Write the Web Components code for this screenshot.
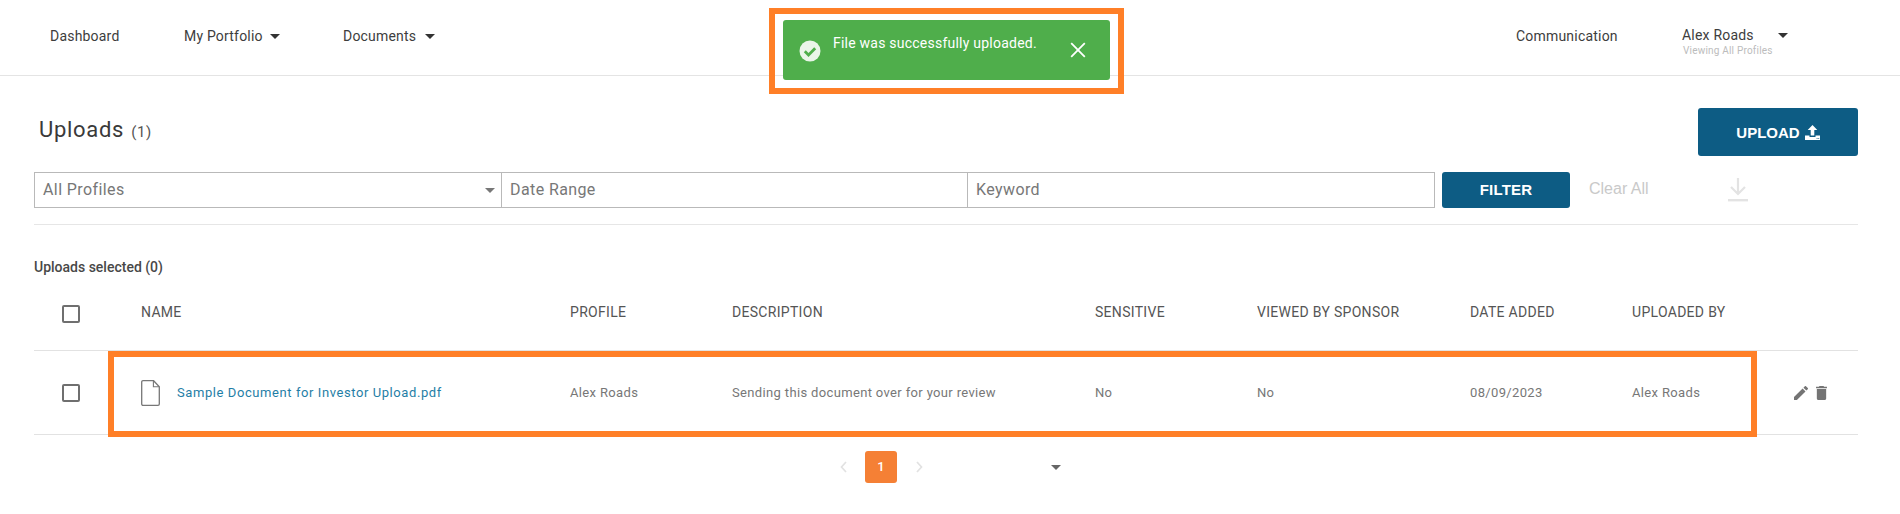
<!DOCTYPE html>
<html lang="en">
<head>
<meta charset="utf-8">
<title>Uploads</title>
<style>
html,body{margin:0;padding:0;background:#fff;font-family:Roboto,"Liberation Sans",sans-serif;color:#444}
body{position:relative;width:1900px;height:514px;overflow:hidden}
</style>
</head>
<body>
<app-nav>
  <nav-link slot="left" style="width:134px">Dashboard</nav-link>
  <nav-link slot="left" caret style="width:159px;gap:7px">My Portfolio</nav-link>
  <nav-link slot="left" caret>Documents</nav-link>
  <nav-link slot="right" style="width:166px">Communication</nav-link>
  <user-menu slot="right" name="Alex Roads" sub="Viewing All Profiles"></user-menu>
</app-nav>
<uploads-page></uploads-page>
<success-toast>File was successfully uploaded.</success-toast>
<callout-box style="left:769px;top:8px;width:355px;height:86px"></callout-box>
<callout-box style="left:108px;top:351px;width:1649px;height:86px"></callout-box>
<script>
const caret = c => `<svg width="10" height="5" viewBox="0 0 10 5" style="display:block"><path d="M0 0h10L5 5z" fill="${c}"/></svg>`;
class AppNav extends HTMLElement{constructor(){super();this.attachShadow({mode:'open'}).innerHTML=`<style>
:host{display:flex;justify-content:space-between;align-items:center;height:76px;border-bottom:1px solid #e4e4e4;box-sizing:border-box;padding:0 0 3px 50px}
.g{display:flex;align-items:center}.r{padding-right:112px}
</style><div class="g"><slot name="left"></slot></div><div class="g r"><slot name="right"></slot></div>`}}
customElements.define('app-nav',AppNav);
class NavLink extends HTMLElement{connectedCallback(){if(this.shadowRoot)return;this.attachShadow({mode:'open'}).innerHTML=`<style>
:host{display:flex;align-items:center;gap:9px;font:14px/20px Roboto,sans-serif;color:#3d3d3d;letter-spacing:.2px}
</style><slot></slot>${this.hasAttribute('caret')?caret('#333'):''}`}}
customElements.define('nav-link',NavLink);
class UserMenu extends HTMLElement{connectedCallback(){this.attachShadow({mode:'open'}).innerHTML=`<style>
:host{display:grid;grid-template-columns:96px auto;align-items:center;font-family:Roboto,sans-serif;margin-top:11px}
.n{font-size:14px;line-height:17px;color:#3d3d3d;letter-spacing:.2px}
.s{grid-column:1/3;font-size:10px;line-height:13px;color:#bcbcbc;letter-spacing:.2px;white-space:nowrap;padding-left:1px}
</style><div class="n">${this.getAttribute('name')}</div><div>${caret('#333')}</div><div class="s">${this.getAttribute('sub')}</div>`}}
customElements.define('user-menu',UserMenu);

class SuccessToast extends HTMLElement{constructor(){super();this.attachShadow({mode:'open'}).innerHTML=`<style>
:host{position:absolute;left:783px;top:20px;width:327px;height:60px;background:#4fae4b;border-radius:3px;display:flex;color:#fff;font:14px/20px Roboto,sans-serif;letter-spacing:.23px}
.i{margin:20px 0 0 16px;width:22px;height:22px;flex:none}
.t{margin:13px 0 0 12px;flex:1}
.x{margin:21px 23px 0 0;width:18px;height:18px;flex:none}
</style>
<svg class="i" viewBox="0 0 22 22"><circle cx="11" cy="11" r="10.5" fill="#eaf5e9"/><path d="M5.8 11.3l3.7 3.7L16.2 8.3" fill="none" stroke="#4fae4b" stroke-width="2.8"/></svg>
<div class="t"><slot></slot></div>
<svg class="x" viewBox="0 0 18 18"><path d="M2.2 2.2l13.6 13.6M15.8 2.2L2.2 15.8" stroke="#fff" stroke-width="1.8" fill="none"/></svg>`}}
customElements.define('success-toast',SuccessToast);
class CalloutBox extends HTMLElement{constructor(){super();this.attachShadow({mode:'open'}).innerHTML=`<style>
:host{position:absolute;box-sizing:border-box;border:6px solid #ff7f27;pointer-events:none}
</style>`}}
customElements.define('callout-box',CalloutBox);

class SquareCheck extends HTMLElement{constructor(){super();this.attachShadow({mode:'open'}).innerHTML=`<style>
:host{display:block;box-sizing:border-box;width:18px;height:18px;border:2px solid #6f6f6f;border-radius:2px;background:#fff}
</style>`}}
customElements.define('square-check',SquareCheck);

class PageHead extends HTMLElement{constructor(){super();this.attachShadow({mode:'open'}).innerHTML=`<style>
:host{display:flex;justify-content:space-between;padding-top:32px;height:48px;padding-left:5px}
h1{margin:0;font:400 22px/44px Roboto,sans-serif;color:#3a3a3a;letter-spacing:.7px}
small{font-size:15px;color:#555;margin-left:7px;letter-spacing:.6px}
button{all:unset;box-sizing:border-box;width:160px;height:48px;background:#0d5c84;border-radius:3px;color:#fff;font:700 15px "Liberation Sans",Arial,sans-serif;display:flex;align-items:center;justify-content:center;gap:5px}
</style><h1>Uploads<small>(1)</small></h1>
<button>UPLOAD <svg width="15" height="15" viewBox="0 0 15 15"><path fill-rule="evenodd" d="M7.5 0L12.3 5H9.3v5.5H5.7V5H2.7zM0 10.5h4.5v1.6h6v-1.6H15V15H0zM11.6 12.9h1v.8h-1zM13.2 12.9h1v.8h-1z" fill="#fff"/></svg></button>`}}
customElements.define('page-head',PageHead);

class FilterBar extends HTMLElement{constructor(){super();this.attachShadow({mode:'open'}).innerHTML=`<style>
:host{display:flex;height:36px;margin-top:16px;padding-bottom:16px;border-bottom:1px solid #e6e6e6;font-family:Roboto,sans-serif}
.f{box-sizing:border-box;height:36px;border:1px solid #b9b9b9;font-size:16px;line-height:34px;color:#777;padding-left:8px;letter-spacing:.4px;position:relative}
.a{width:468px;padding-left:8px;display:flex;justify-content:space-between;align-items:center}
.a svg{margin-right:6px}
.b{width:466px;border-left:0}.c{width:467px;border-left:0}
button{all:unset;box-sizing:border-box;width:128px;height:36px;margin-left:7px;background:#0d5c84;border-radius:3px;color:#fff;font:700 15px "Liberation Sans",Arial,sans-serif;text-align:center;line-height:36px;letter-spacing:.2px}
.clear{margin-left:19px;width:139px;font:16px/34px "Liberation Sans",Arial,sans-serif;color:#c9c9c9}
.d{margin-top:6px}
</style><div class="f a">All Profiles ${caret('#777')}</div><div class="f b">Date Range</div><div class="f c">Keyword</div>
<button>FILTER</button><div class="clear">Clear All</div>
<svg class="d" width="20" height="24" viewBox="0 0 20 24"><path d="M10 0v15M3 9l7 7 7-7" fill="none" stroke="#e3e3e3" stroke-width="2.2"/><path d="M0 21h20v2.4H0z" fill="#e3e3e3"/></svg>`}}
customElements.define('filter-bar',FilterBar);

class RowActions extends HTMLElement{constructor(){super();this.attachShadow({mode:'open'}).innerHTML=`<style>
:host{display:flex;gap:7px;align-items:center}
svg{display:block}
</style><svg width="14" height="14" viewBox="3 3 18 18"><path fill="#747474" d="M3 17.25V21h3.75L17.81 9.94l-3.75-3.75L3 17.25zM20.71 7.04a1 1 0 0 0 0-1.41l-2.34-2.34a1 1 0 0 0-1.41 0l-1.83 1.83 3.75 3.75 1.83-1.83z"/></svg><svg width="13" height="14" viewBox="5 3 14 18"><path fill="#747474" d="M6 19c0 1.1.9 2 2 2h8c1.1 0 2-.9 2-2V7H6v12zM19 4h-3.5l-1-1h-5l-1 1H5v2h14V4z"/></svg>`}}
customElements.define('row-actions',RowActions);

class UploadsTable extends HTMLElement{constructor(){super();
this.attachShadow({mode:'open'}).innerHTML=`<style>
:host{display:block;font-family:Roboto,sans-serif}
.sel{font:500 14px/20px Roboto,sans-serif;color:#484848;margin-top:32px}
.row{display:grid;grid-template-columns:107px 429px 162px 363px 162px 213px 162px 162px 64px;align-items:center;width:1824px}
.head{height:73px;font-size:14px;color:#555;letter-spacing:.3px}
.head>div:not(.ck){margin-top:-4px}
.body{height:83px;border-top:1px solid #e2e2e2;border-bottom:1px solid #e2e2e2;font-size:13px;color:#777;letter-spacing:.35px}
.ck{padding-left:28px}
.name{display:flex;align-items:center;gap:17px;color:#1f7ea6;letter-spacing:.58px}
</style>
<div class="sel">Uploads selected (0)</div>
<div class="row head"><div class="ck"><square-check></square-check></div><div>NAME</div><div>PROFILE</div><div>DESCRIPTION</div><div>SENSITIVE</div><div>VIEWED BY SPONSOR</div><div>DATE ADDED</div><div>UPLOADED BY</div></div>
<div class="row body"><div class="ck"><square-check></square-check></div>
<div class="name"><svg width="19" height="26" viewBox="0 0 19 26" style="flex:none"><path d="M2 .7h10.6l5.7 6V24a1.3 1.3 0 0 1-1.3 1.3H2A1.3 1.3 0 0 1 .7 24V2A1.3 1.3 0 0 1 2 .7z" fill="none" stroke="#777" stroke-width="1.3"/><path d="M12.4 1v5.8h5.8" fill="none" stroke="#777" stroke-width="1.1"/></svg><span>Sample Document for Investor Upload.pdf</span></div>
<div>Alex Roads</div><div>Sending this document over for your review</div><div>No</div><div>No</div><div>08/09/2023</div><div>Alex Roads</div><row-actions></row-actions>
</div>`;
}}
customElements.define('uploads-table',UploadsTable);

class PagerBar extends HTMLElement{constructor(){super();this.attachShadow({mode:'open'}).innerHTML=`<style>
:host{display:flex;align-items:center;height:32px;margin-top:16px;padding-left:806px;font-family:Roboto,sans-serif}
svg{display:block;flex:none}
.p{width:32px;height:32px;box-sizing:border-box;background:#f58035;border-radius:3px;color:#fff;font:500 13px/32px Roboto,sans-serif;text-align:center;margin:0 19px 0 18px}
.c{margin-left:128px}
</style><svg width="7" height="12" viewBox="0 0 7 12"><path d="M6 1L1.5 6 6 11" fill="none" stroke="#e2e2e2" stroke-width="1.7"/></svg><div class="p">1</div><svg width="7" height="12" viewBox="0 0 7 12"><path d="M1 1l4.5 5L1 11" fill="none" stroke="#e2e2e2" stroke-width="1.7"/></svg><div class="c">${caret('#666')}</div>`}}
customElements.define('pager-bar',PagerBar);

class UploadsPage extends HTMLElement{constructor(){super();this.attachShadow({mode:'open'}).innerHTML=`<style>
:host{display:block;padding:0 42px 0 34px}
</style><page-head></page-head><filter-bar></filter-bar><uploads-table></uploads-table><pager-bar></pager-bar>`}}
customElements.define('uploads-page',UploadsPage);
</script>
</body>
</html>
